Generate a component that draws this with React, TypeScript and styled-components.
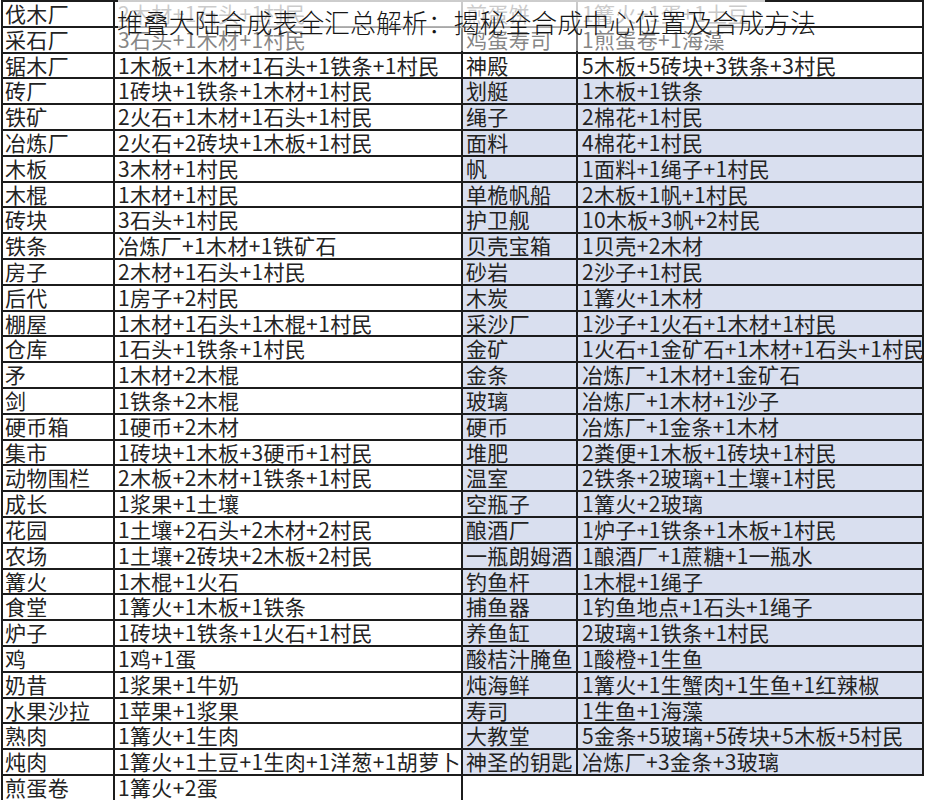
import React from "react";
import styled, { createGlobalStyle } from "styled-components";

type Recipe = [string, string];

const leftRows: Recipe[] = [
  ["伐木厂", "2木材+1石头+1村民"],
  ["采石厂", "3石头+1木材+1村民"],
  ["锯木厂", "1木板+1木材+1石头+1铁条+1村民"],
  ["砖厂", "1砖块+1铁条+1木材+1村民"],
  ["铁矿", "2火石+1木材+1石头+1村民"],
  ["冶炼厂", "2火石+2砖块+1木板+1村民"],
  ["木板", "3木材+1村民"],
  ["木棍", "1木材+1村民"],
  ["砖块", "3石头+1村民"],
  ["铁条", "冶炼厂+1木材+1铁矿石"],
  ["房子", "2木材+1石头+1村民"],
  ["后代", "1房子+2村民"],
  ["棚屋", "1木材+1石头+1木棍+1村民"],
  ["仓库", "1石头+1铁条+1村民"],
  ["矛", "1木材+2木棍"],
  ["剑", "1铁条+2木棍"],
  ["硬币箱", "1硬币+2木材"],
  ["集市", "1砖块+1木板+3硬币+1村民"],
  ["动物围栏", "2木板+2木材+1铁条+1村民"],
  ["成长", "1浆果+1土壤"],
  ["花园", "1土壤+2石头+2木材+2村民"],
  ["农场", "1土壤+2砖块+2木板+2村民"],
  ["篝火", "1木棍+1火石"],
  ["食堂", "1篝火+1木板+1铁条"],
  ["炉子", "1砖块+1铁条+1火石+1村民"],
  ["鸡", "1鸡+1蛋"],
  ["奶昔", "1浆果+1牛奶"],
  ["水果沙拉", "1苹果+1浆果"],
  ["熟肉", "1篝火+1生肉"],
  ["炖肉", "1篝火+1土豆+1生肉+1洋葱+1胡萝卜"],
  ["煎蛋卷", "1篝火+2蛋"],
];

const rightRows: Recipe[] = [
  ["煎蛋饼", "1篝火+1蛋+1土豆"],
  ["鸡蛋寿司", "1煎蛋卷+1海藻"],
  ["神殿", "5木板+5砖块+3铁条+3村民"],
  ["划艇", "1木板+1铁条"],
  ["绳子", "2棉花+1村民"],
  ["面料", "4棉花+1村民"],
  ["帆", "1面料+1绳子+1村民"],
  ["单桅帆船", "2木板+1帆+1村民"],
  ["护卫舰", "10木板+3帆+2村民"],
  ["贝壳宝箱", "1贝壳+2木材"],
  ["砂岩", "2沙子+1村民"],
  ["木炭", "1篝火+1木材"],
  ["采沙厂", "1沙子+1火石+1木材+1村民"],
  ["金矿", "1火石+1金矿石+1木材+1石头+1村民"],
  ["金条", "冶炼厂+1木材+1金矿石"],
  ["玻璃", "冶炼厂+1木材+1沙子"],
  ["硬币", "冶炼厂+1金条+1木材"],
  ["堆肥", "2粪便+1木板+1砖块+1村民"],
  ["温室", "2铁条+2玻璃+1土壤+1村民"],
  ["空瓶子", "1篝火+2玻璃"],
  ["酿酒厂", "1炉子+1铁条+1木板+1村民"],
  ["一瓶朗姆酒", "1酿酒厂+1蔗糖+1一瓶水"],
  ["钓鱼杆", "1木棍+1绳子"],
  ["捕鱼器", "1钓鱼地点+1石头+1绳子"],
  ["养鱼缸", "2玻璃+1铁条+1村民"],
  ["酸桔汁腌鱼", "1酸橙+1生鱼"],
  ["炖海鲜", "1篝火+1生蟹肉+1生鱼+1红辣椒"],
  ["寿司", "1生鱼+1海藻"],
  ["大教堂", "5金条+5玻璃+5砖块+5木板+5村民"],
  ["神圣的钥匙", "冶炼厂+3金条+3玻璃"],
];

// rows from this index on are tinted in the right sheet
const SHADE_FROM = 3;

const GlobalStyle = createGlobalStyle`
  html, body {
    margin: 0;
    padding: 0;
    background: #ffffff;
  }
  body {
    font-family: "Noto Sans CJK SC", "Noto Sans", sans-serif;
    color: #232323;
    overflow: hidden;
  }
`;

const Page = styled.div`
  position: relative;
  width: 929px;
  height: 800px;
  overflow: hidden;
  padding-left: 1px;
  box-sizing: border-box;
  display: flex;
  align-items: flex-start;
`;

const Sheet = styled.div<{ $cols: string; $edge?: boolean }>`
  display: grid;
  grid-template-columns: ${(p) => p.$cols};
  grid-auto-rows: 25.8px;
  border-top: 2px solid #1c1c1c;
  border-left: ${(p) => (p.$edge ? "2px solid #1c1c1c" : "none")};
`;

const Cell = styled.div<{ $shade?: boolean; $pad: number }>`
  box-sizing: border-box;
  border-right: 2px solid #1c1c1c;
  border-bottom: 2px solid #1c1c1c;
  background: ${(p) => (p.$shade ? "#d9dfef" : "#ffffff")};
  padding-left: ${(p) => p.$pad}px;
  font-size: 21px;
  line-height: 23.8px;
  white-space: nowrap;
  overflow: visible;
  position: relative;
  letter-spacing: 0.35px;
`;

const Spill = styled.span`
  position: relative;
  z-index: 1;
`;

const Fade = styled.div`
  position: absolute;
  left: 118px;
  top: 0;
  width: 647px;
  height: 51px;
  background: linear-gradient(
    to bottom,
    rgba(255, 255, 255, 0.78) 0%,
    rgba(255, 255, 255, 0.72) 50%,
    rgba(255, 255, 255, 0.45) 60%,
    rgba(255, 255, 255, 0.45) 100%
  );
  z-index: 2;
`;

const Title = styled.h1`
  position: absolute;
  left: 117px;
  top: 5px;
  margin: 0;
  font-family: "Noto Sans CJK SC", "Noto Sans", sans-serif;
  font-weight: 300;
  font-size: 25.9px;
  line-height: 34px;
  color: #161616;
  white-space: nowrap;
  z-index: 3;
`;

const RecipeSheet: React.FC<{
  rows: Recipe[];
  cols: string;
  edge?: boolean;
  shadeFrom?: number;
  pads: [number, number];
}> = ({ rows, cols, edge, shadeFrom, pads }) => (
  <Sheet $cols={cols} $edge={edge}>
    {rows.map(([name, recipe], i) => {
      const shade = shadeFrom !== undefined && i >= shadeFrom;
      return (
        <React.Fragment key={name}>
          <Cell $shade={shade} $pad={pads[0]}>
            {name}
          </Cell>
          <Cell $shade={shade} $pad={pads[1]}>
            <Spill>{recipe}</Spill>
          </Cell>
        </React.Fragment>
      );
    })}
  </Sheet>
);

export default function App() {
  return (
    <>
      <GlobalStyle />
      <Page>
        <RecipeSheet rows={leftRows} cols="112px 348px" edge pads={[2, 3]} />
        <RecipeSheet
          rows={rightRows}
          cols="115px 346px"
          shadeFrom={SHADE_FROM}
          pads={[3, 4]}
        />
        <Fade />
        <Title>堆叠大陆合成表全汇总解析：揭秘全合成中心位置及合成方法</Title>
      </Page>
    </>
  );
}
